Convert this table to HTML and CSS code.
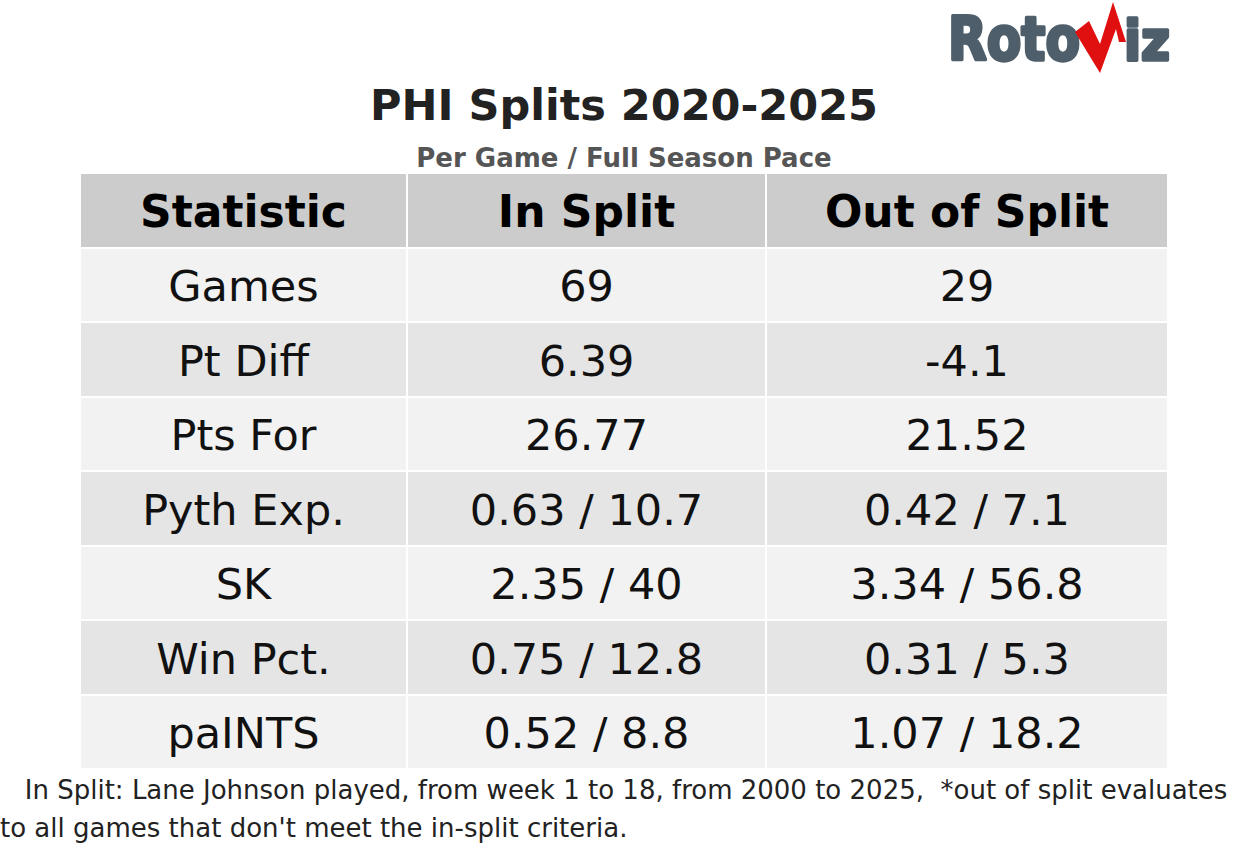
FILE: index.html
```html
<!DOCTYPE html>
<html lang="en">
<head>
<meta charset="utf-8">
<title>PHI Splits 2020-2025</title>
<link rel="stylesheet" href="styles.css">
</head>
<body>
<header class="brand">
  <svg class="logo" width="260" height="80" viewBox="0 0 260 80" aria-label="RotoViz">
    <text class="logo-text" x="8" y="60.3" textLength="132" lengthAdjust="spacingAndGlyphs">Roto</text>
    <polygon class="logo-v" points="135,32 149,21 160,44 173,2 186,42 179,42 176,29 160,73"/>
    <text class="logo-text logo-small" x="184" y="60.3" textLength="46" lengthAdjust="spacingAndGlyphs">iz</text>
  </svg>
</header>
<h1 class="title">PHI Splits 2020-2025</h1>
<p class="subtitle">Per Game / Full Season Pace</p>
<div class="table">
  <div class="row head"><div class="cell">Statistic</div><div class="cell">In Split</div><div class="cell">Out of Split</div></div>
  <div class="row odd"><div class="cell">Games</div><div class="cell">69</div><div class="cell">29</div></div>
  <div class="row even"><div class="cell">Pt Diff</div><div class="cell">6.39</div><div class="cell">-4.1</div></div>
  <div class="row odd"><div class="cell">Pts For</div><div class="cell">26.77</div><div class="cell">21.52</div></div>
  <div class="row even"><div class="cell">Pyth Exp.</div><div class="cell">0.63 / 10.7</div><div class="cell">0.42 / 7.1</div></div>
  <div class="row odd"><div class="cell">SK</div><div class="cell">2.35 / 40</div><div class="cell">3.34 / 56.8</div></div>
  <div class="row even"><div class="cell">Win Pct.</div><div class="cell">0.75 / 12.8</div><div class="cell">0.31 / 5.3</div></div>
  <div class="row odd"><div class="cell">paINTS</div><div class="cell">0.52 / 8.8</div><div class="cell">1.07 / 18.2</div></div>
</div>
<p class="note"><span class="line">   In Split: Lane Johnson played, from week 1 to 18, from 2000 to 2025,  *out of split evaluates</span><span class="line">to all games that don't meet the in-split criteria.</span></p>
</body>
</html>
```

FILE: styles.css
```css
html, body {
  margin: 0;
  padding: 0;
  background: #ffffff;
}

body {
  width: 1248px;
  height: 866px;
  overflow: hidden;
  font-family: "DejaVu Sans", "Liberation Sans", sans-serif;
  color: #111111;
}

.brand {
  height: 80px;
  display: flex;
  justify-content: flex-end;
  padding-right: 48px;
}

.logo {
  display: block;
  overflow: visible;
}

.logo-text {
  font-family: "DejaVu Sans", sans-serif;
  font-weight: bold;
  font-size: 60px;
  fill: #4e5e6a;
  stroke: #4e5e6a;
  stroke-width: 3.5px;
  stroke-linejoin: round;
}

.logo-small {
  font-size: 55px;
}

.logo-v {
  fill: #e01010;
}

.title {
  margin: 0;
  font-size: 43px;
  line-height: 50px;
  font-weight: bold;
  color: #222222;
  text-align: center;
}

.subtitle {
  margin: 13px 0 0;
  font-size: 26px;
  line-height: 30px;
  font-weight: bold;
  color: #555555;
  text-align: center;
}

.table {
  margin: 1px 0 0 81px;
  width: 1086px;
  display: grid;
  grid-template-columns: 325px 357px 400px;
  grid-auto-rows: 72.5px;
  gap: 2px;
}

.row {
  display: contents;
}

.cell {
  display: flex;
  align-items: center;
  justify-content: center;
  padding-top: 3px;
  box-sizing: border-box;
  font-size: 43px;
  white-space: nowrap;
}

.head .cell {
  background: #cccccc;
  font-weight: bold;
  font-size: 44px;
  color: #000000;
  padding-top: 2px;
}

.odd .cell {
  background: #f2f2f2;
}

.even .cell {
  background: #e5e5e5;
}

.note {
  margin: 3px 0 0;
  font-size: 26px;
  line-height: 38px;
  color: #222222;
}

.line {
  display: block;
  white-space: pre;
}
```
